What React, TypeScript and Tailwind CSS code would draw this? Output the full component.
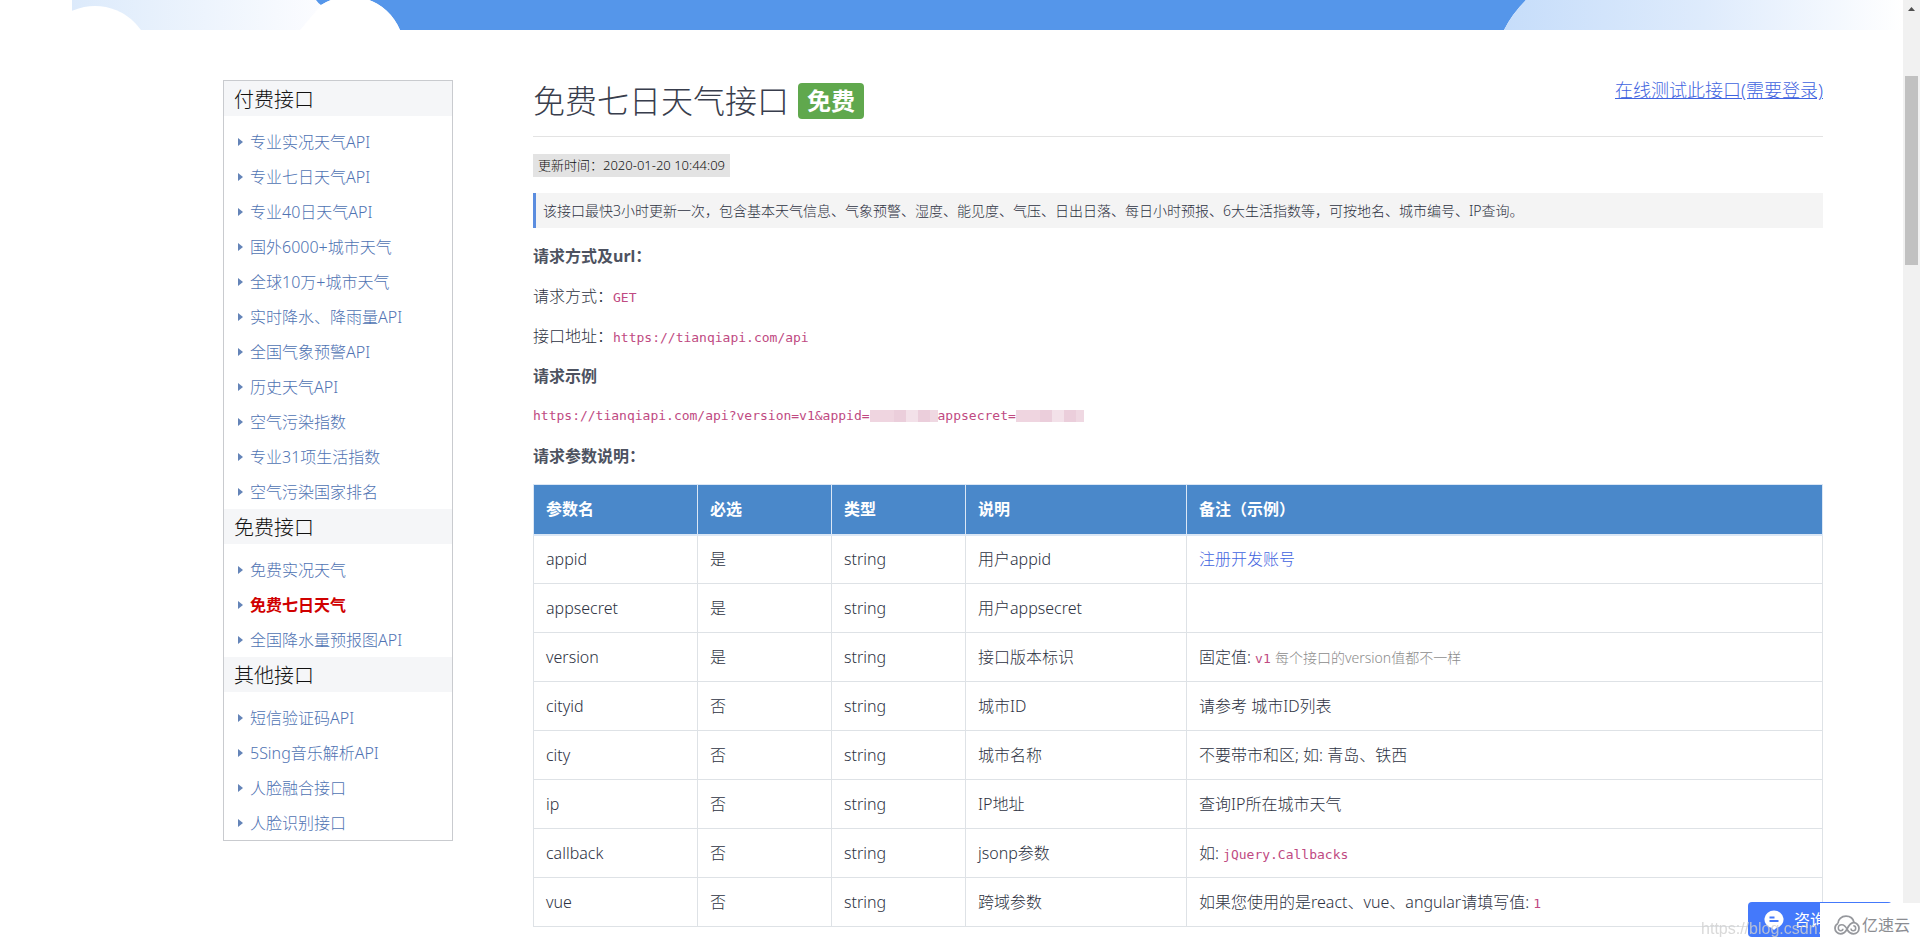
import type { ReactNode } from "react";

type Group = { title: string; items: string[] };

const GROUPS: Group[] = [
  {
    title: "付费接口",
    items: [
      "专业实况天气API",
      "专业七日天气API",
      "专业40日天气API",
      "国外6000+城市天气",
      "全球10万+城市天气",
      "实时降水、降雨量API",
      "全国气象预警API",
      "历史天气API",
      "空气污染指数",
      "专业31项生活指数",
      "空气污染国家排名",
    ],
  },
  { title: "免费接口", items: ["免费实况天气", "免费七日天气", "全国降水量预报图API"] },
  { title: "其他接口", items: ["短信验证码API", "5Sing音乐解析API", "人脸融合接口", "人脸识别接口"] },
];

const ACTIVE = "免费七日天气";

const HEADS = [
  { label: "参数名", width: "w-[164px]" },
  { label: "必选", width: "w-[134px]" },
  { label: "类型", width: "w-[134px]" },
  { label: "说明", width: "w-[221px]" },
  { label: "备注（示例）", width: "" },
];

type Param = { name: string; required: string; desc: string; note?: ReactNode };

const PARAMS: Param[] = [
  {
    name: "appid",
    required: "是",
    desc: "用户appid",
    note: (
      <a href="#register" className="text-[#3f63e0]">
        注册开发账号
      </a>
    ),
  },
  { name: "appsecret", required: "是", desc: "用户appsecret" },
  {
    name: "version",
    required: "是",
    desc: "接口版本标识",
    note: (
      <>
        固定值: <Code>v1</Code> <span className="text-sm text-[#8c8c8c]">每个接口的version值都不一样</span>
      </>
    ),
  },
  { name: "cityid", required: "否", desc: "城市ID", note: "请参考 城市ID列表" },
  { name: "city", required: "否", desc: "城市名称", note: "不要带市和区; 如: 青岛、铁西" },
  { name: "ip", required: "否", desc: "IP地址", note: "查询IP所在城市天气" },
  {
    name: "callback",
    required: "否",
    desc: "jsonp参数",
    note: (
      <>
        如: <Code>jQuery.Callbacks</Code>
      </>
    ),
  },
  {
    name: "vue",
    required: "否",
    desc: "跨域参数",
    note: (
      <>
        如果您使用的是react、vue、angular请填写值: <Code>1</Code>
      </>
    ),
  },
];

function Code({ children }: { children: ReactNode }) {
  return (
    <code className="font-['DejaVu_Sans_Mono','Liberation_Mono',monospace] text-[13px] font-normal text-[#c04a82]">
      {children}
    </code>
  );
}

/** Blocked-out credential inside the example url. */
function Mask() {
  return (
    <span aria-hidden className="flex h-3">
      <span className="w-6 bg-[#efd5e0]" />
      <span className="w-3 bg-[#ebcedb]" />
      <span className="w-3 bg-[#f3e1e9]" />
      <span className="w-3 bg-[#ebcedb]" />
      <span className="w-2 bg-[#efd8e2]" />
    </span>
  );
}

/** Bottom edge of the cloud banner. */
function Banner() {
  return (
    <svg aria-hidden viewBox="0 0 1903 30" preserveAspectRatio="none" className="block h-[30px] w-full">
      <defs>
        <linearGradient id="cloud-left" x1="0" x2="1" y1="0" y2="0">
          <stop offset="0" stopColor="#dceafb" />
          <stop offset="0.3" stopColor="#e6f0fc" />
          <stop offset="1" stopColor="#fdfdff" />
        </linearGradient>
        <linearGradient id="cloud-right" x1="0" x2="1" y1="0" y2="0">
          <stop offset="0" stopColor="#c6ddfa" />
          <stop offset="0.5" stopColor="#deebfc" />
          <stop offset="1" stopColor="#ffffff" />
        </linearGradient>
      </defs>
      <rect x="72" width="260" height="30" fill="url(#cloud-left)" />
      <circle cx="95" cy="62" r="56" fill="#fff" />
      <path d="M316 0H1526Q1512 14 1504 30H400A54 54 0 0 0 321 5Q318 3 316 0Z" fill="#5596ea" />
      <path d="M321 5A54 54 0 0 1 400 30H300Z" fill="#fff" />
      <path d="M1526 0H1903V30H1504Q1512 14 1526 0Z" fill="url(#cloud-right)" />
    </svg>
  );
}

function Sidebar() {
  return (
    <nav className="w-[230px] shrink-0 self-start border border-[#c9cbcf]">
      {GROUPS.map((group) => (
        <section key={group.title}>
          <h2 className="bg-[#f5f6f8] pt-0.5 pl-2.5 text-xl leading-[33px] text-[#111]">{group.title}</h2>
          <ul className="pt-2">
            {group.items.map((item) => (
              <li key={item} className="flex h-[35px] items-center gap-[7px] pl-3.5">
                <svg aria-hidden viewBox="0 0 5 8" className="h-2 w-[5px] fill-[#6484b8]">
                  <path d="M0 0L5 4L0 8Z" />
                </svg>
                <a href="#api" className={item === ACTIVE ? "font-bold text-[#d00000]" : "text-[#4f73b3]"}>
                  {item}
                </a>
              </li>
            ))}
          </ul>
        </section>
      ))}
    </nav>
  );
}

function ParamTable() {
  return (
    <table className="w-full table-fixed border-collapse border border-[#dee2e6] text-left">
      <thead>
        <tr className="h-[50px] bg-[#4a88ca] text-white">
          {HEADS.map((head) => (
            <th key={head.label} className={`border border-b-2 border-[#dbe7f5] px-3 font-bold ${head.width}`}>
              {head.label}
            </th>
          ))}
        </tr>
      </thead>
      <tbody>
        {PARAMS.map((param) => (
          <tr key={param.name} className="h-[49px]">
            <td className="border border-[#dee2e6] px-3">{param.name}</td>
            <td className="border border-[#dee2e6] px-3">{param.required}</td>
            <td className="border border-[#dee2e6] px-3">string</td>
            <td className="border border-[#dee2e6] px-3">{param.desc}</td>
            <td className="border border-[#dee2e6] px-3">{param.note}</td>
          </tr>
        ))}
      </tbody>
    </table>
  );
}

function Scrollbar() {
  return (
    <div aria-hidden className="flex w-[17px] shrink-0 flex-col items-center bg-[#f1f1f1]">
      <svg viewBox="0 0 17 17" className="h-[17px] w-[17px] fill-[#505050]">
        <path d="M5 11L8.5 7L12 11Z" />
      </svg>
      <span className="mt-[59px] h-[189px] w-[13px] bg-[#c1c1c1]" />
    </div>
  );
}

/** Chat button with the watermarks that lie over it. */
function Corner() {
  return (
    <>
      <button
        type="button"
        className="fixed right-[28px] bottom-2.5 flex h-[35px] w-36 items-center gap-2.5 rounded bg-[#4479fb] pl-4 text-base font-normal text-white"
      >
        <svg aria-hidden viewBox="0 0 20 20" className="h-5 w-5">
          <path d="M10 .5a9.500 8.800 0 0 1 2.500 17.300L10 20l-2.500-2.200A9.500 8.800 0 0 1 10 .5Z" fill="#fff" />
          <path d="M5.500 7.500h5M5.500 11h9" stroke="#4479fb" strokeWidth="1.800" />
        </svg>
        咨询
      </button>
      <span className="fixed right-[98px] bottom-1.5 font-['Liberation_Sans',sans-serif] text-base whitespace-nowrap text-[#cfcfcf]/80">
        https://blog.csdn.
      </span>
      <div className="fixed right-0 bottom-0 flex h-11 w-[100px] items-center gap-0.5 bg-white pl-3.5 font-normal text-[#8b8d92]">
        <svg aria-hidden viewBox="0 0 26 20" className="h-5 w-[26px]" fill="none" stroke="#96989d" strokeWidth="1.800">
          <path d="M4 8.500C3.800 4.500 7.500 1.200 12 1.200c4 0 7.200 2.300 8 6.300" />
          <path d="M4 8.500C2.200 9.300 1 11 1 13.300c0 3.100 2.500 5.500 5.600 5.500 2.800 0 4.600-1.400 6.200-4.300C14.500 11 16 7.700 19.500 7.700c3.100 0 5.500 2.500 5.500 5.600s-2.400 5.500-5.500 5.500c-2.800 0-4.700-1.400-6.200-4" />
          <path d="M13.300 14.800C11.700 11.500 10.300 9.800 7.800 9.800c-2 0-3.500 1.300-3.500 3.200 0 1.600 1.100 2.700 2.500 2.700 1.300 0 2.100-.8 2.100-1.900" strokeWidth="1.500" />
          <path d="M17 13.500c0 1.400 1 2.300 2.300 2.300s2.400-1 2.400-2.500-1-2.500-2.400-2.500" strokeWidth="1.500" />
        </svg>
        <span className="text-base">亿速云</span>
      </div>
    </>
  );
}

export default function App() {
  return (
    <div className="flex h-screen overflow-hidden bg-white font-['Noto_Sans','Noto_Sans_CJK_SC',sans-serif] text-base font-light text-[#2d3242]">
      <div className="min-w-0 flex-1">
        <Banner />
        <div className="flex gap-20 pt-[50px] pr-20 pl-[223px]">
          <Sidebar />
          <main className="min-w-0 flex-1">
            <header className="flex items-start justify-between border-b border-[#e3e3e3] pb-3.5">
              <h1 className="flex h-[42px] items-center gap-[9px] text-[32px] text-[#383d4c]">
                免费七日天气接口
                <span className="rounded bg-[#60a84d] px-[9px] text-2xl leading-9 font-bold text-white">免费</span>
              </h1>
              <a href="#test" className="text-lg leading-5 text-[#3f63e0] underline">
                在线测试此接口(需要登录)
              </a>
            </header>
            <p className="mt-[17px] w-fit bg-[#e3e3e3] px-[5px] text-[13px] leading-[23px] text-[#111]">
              更新时间：2020-01-20 10:44:09
            </p>
            <blockquote className="mt-4 border-l-3 border-[#5b8ddf] bg-[#f4f4f4] pl-[7px] text-sm leading-[35px]">
              该接口最快3小时更新一次，包含基本天气信息、气象预警、湿度、能见度、气压、日出日落、每日小时预报、6大生活指数等，可按地名、城市编号、IP查询。
            </blockquote>
            <div className="mt-4 mb-4 grid auto-rows-[24px] gap-4 leading-6">
              <p className="font-bold text-[#4d5260]">请求方式及url：</p>
              <p>
                请求方式：<Code>GET</Code>
              </p>
              <p>
                接口地址：<Code>https://tianqiapi.com/api</Code>
              </p>
              <p className="font-bold text-[#4d5260]">请求示例</p>
              <p className="flex items-center">
                <Code>https://tianqiapi.com/api?version=v1&amp;appid=</Code>
                <Mask />
                <Code>appsecret=</Code>
                <Mask />
              </p>
              <p className="font-bold text-[#4d5260]">请求参数说明：</p>
            </div>
            <ParamTable />
          </main>
        </div>
      </div>
      <Scrollbar />
      <Corner />
    </div>
  );
}
